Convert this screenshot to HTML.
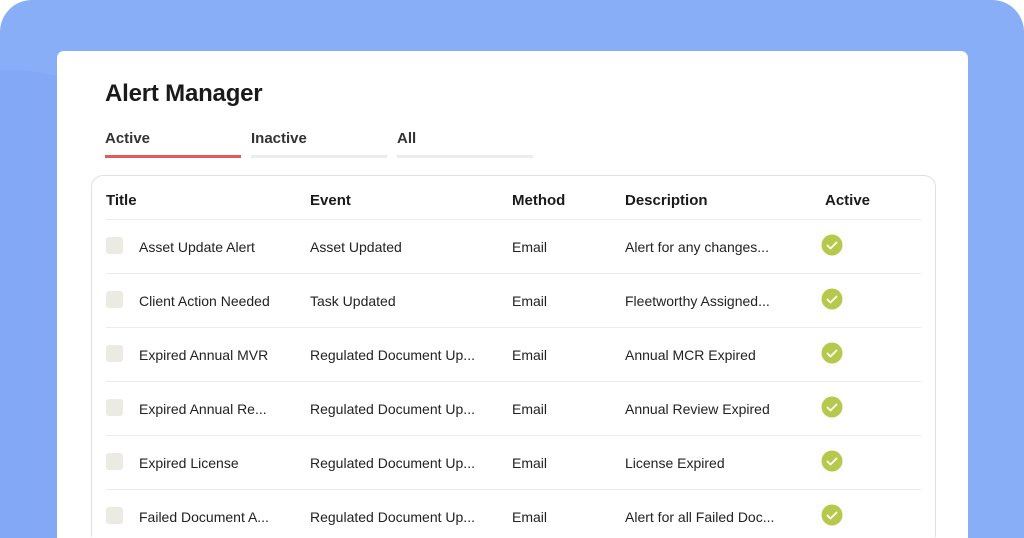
<!DOCTYPE html>
<html><head><style>
html,body{margin:0;padding:0;width:1024px;height:538px;overflow:hidden;background:#fff;}
.wrap{position:relative;width:1024px;height:538px;overflow:hidden;}
.bg{position:absolute;left:0;top:0;width:1024px;height:538px;background:#89aef8;border-radius:32px 32px 0 0;overflow:hidden;}
.bg:before{content:"";position:absolute;left:-200px;top:70px;width:420px;height:468px;border-radius:50% 50% 0 0;background:#82a8f6;}
.card{position:absolute;left:57px;top:51px;width:911px;height:487px;overflow:hidden;background:#fff;border-radius:7px 7px 0 0;font-family:"Liberation Sans",sans-serif;color:#1a1a1a;}
h1{position:absolute;left:48px;top:29px;margin:0;font-size:24px;font-weight:bold;letter-spacing:-0.2px;}
.tab{position:absolute;top:79px;font-size:15px;font-weight:bold;color:#333;}
.ul{position:absolute;top:104px;height:3px;width:136px;background:#ececec;}
.box{position:absolute;left:34px;top:124px;width:843px;height:361px;border:1px solid #e0e0e0;border-bottom:none;border-radius:12px 12px 0 0;}
.th{position:absolute;top:141px;font-size:15px;font-weight:bold;}
.line{position:absolute;left:49px;width:815px;height:1px;background:#ebebeb;}
.td{position:absolute;font-size:14px;color:#222;margin-top:1px;}
.cb{position:absolute;left:49px;width:17px;height:17px;border-radius:3px;background:#ebebe3;}
</style></head><body><div class="wrap">
<div class="bg"></div>
<div class="card">
<h1>Alert Manager</h1>
<div class="tab" style="left:48px">Active</div>
<div class="tab" style="left:194px">Inactive</div>
<div class="tab" style="left:340px">All</div>
<div class="ul" style="left:48px;background:#e05a5a"></div>
<div class="ul" style="left:194px"></div>
<div class="ul" style="left:340px"></div>
<div class="box"></div>
<div class="th" style="left:49px">Title</div>
<div class="th" style="left:253px">Event</div>
<div class="th" style="left:455px">Method</div>
<div class="th" style="left:568px">Description</div>
<div class="th" style="left:768px">Active</div>
<div class="line" style="top:168px"></div>
<div class="line" style="top:222px"></div>
<div class="line" style="top:276px"></div>
<div class="line" style="top:330px"></div>
<div class="line" style="top:384px"></div>
<div class="line" style="top:438px"></div>

<div class="cb" style="top:186px"></div><div class="td" style="left:82px;top:187px">Asset Update Alert</div><div class="td" style="left:253px;top:187px">Asset Updated</div><div class="td" style="left:455px;top:187px">Email</div><div class="td" style="left:568px;top:187px">Alert for any changes...</div>
<div class="cb" style="top:240px"></div><div class="td" style="left:82px;top:241px">Client Action Needed</div><div class="td" style="left:253px;top:241px">Task Updated</div><div class="td" style="left:455px;top:241px">Email</div><div class="td" style="left:568px;top:241px">Fleetworthy Assigned...</div>
<div class="cb" style="top:294px"></div><div class="td" style="left:82px;top:295px">Expired Annual MVR</div><div class="td" style="left:253px;top:295px">Regulated Document Up...</div><div class="td" style="left:455px;top:295px">Email</div><div class="td" style="left:568px;top:295px">Annual MCR Expired</div>
<div class="cb" style="top:348px"></div><div class="td" style="left:82px;top:349px">Expired Annual Re...</div><div class="td" style="left:253px;top:349px">Regulated Document Up...</div><div class="td" style="left:455px;top:349px">Email</div><div class="td" style="left:568px;top:349px">Annual Review Expired</div>
<div class="cb" style="top:402px"></div><div class="td" style="left:82px;top:403px">Expired License</div><div class="td" style="left:253px;top:403px">Regulated Document Up...</div><div class="td" style="left:455px;top:403px">Email</div><div class="td" style="left:568px;top:403px">License Expired</div>
<div class="cb" style="top:456px"></div><div class="td" style="left:82px;top:457px">Failed Document A...</div><div class="td" style="left:253px;top:457px">Regulated Document Up...</div><div class="td" style="left:455px;top:457px">Email</div><div class="td" style="left:568px;top:457px">Alert for all Failed Doc...</div>

<svg style="position:absolute;left:0;top:0" width="911" height="487">
<g fill="#b7c94c"><circle cx="775" cy="194" r="10.5"/><circle cx="775" cy="248" r="10.5"/><circle cx="775" cy="302" r="10.5"/><circle cx="775" cy="356" r="10.5"/><circle cx="775" cy="410" r="10.5"/><circle cx="775" cy="464" r="10.5"/></g>
<g fill="none" stroke="#fff" stroke-width="1.8" stroke-linecap="round" stroke-linejoin="round">
<path d="M770.5 194.5l3 3 6-6"/><path d="M770.5 248.5l3 3 6-6"/><path d="M770.5 302.5l3 3 6-6"/><path d="M770.5 356.5l3 3 6-6"/><path d="M770.5 410.5l3 3 6-6"/><path d="M770.5 464.5l3 3 6-6"/>
</g></svg>
</div>
</div></body></html>
